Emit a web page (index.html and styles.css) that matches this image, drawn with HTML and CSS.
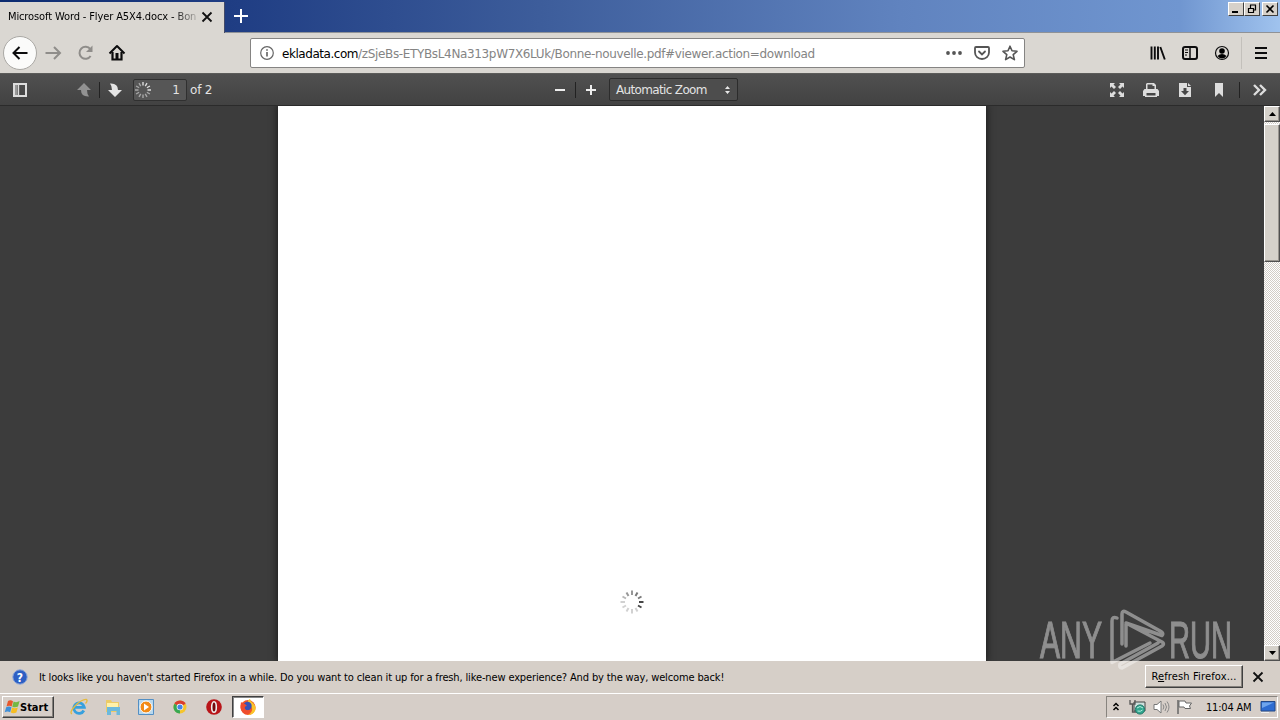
FILE: index.html
```html
<!DOCTYPE html>
<html lang="en">
<head>
    <meta charset="UTF-8">
    <meta name="viewport" content="width=device-width, initial-scale=1.0">
    <title>Microsoft Word - Flyer A5X4.docx - Bonne-nouvelle.pdf</title>
    <link rel="stylesheet" href="styles.css">
</head>
<body>

<header class="titlebar">
    <div class="tab">
        <span class="tab-title">Microsoft Word - Flyer A5X4.docx - Bon</span>
        <svg class="tab-close" width="12" height="12" viewBox="0 0 12 12"><path d="M1.500 1.500l9 9M10.500 1.500l-9 9" stroke="#111" stroke-width="1.800"/></svg>
    </div>
    <svg class="new-tab" width="16" height="16" viewBox="0 0 16 16"><path d="M8 1v14M1 8h14" stroke="#fff" stroke-width="2"/></svg>
    <div class="window-buttons">
        <span class="win-btn"><svg width="14" height="12"><path d="M3 9h6" stroke="#000" stroke-width="2"/></svg></span>
        <span class="win-btn"><svg width="14" height="12"><path d="M5 2h6M5.500 2v3M10.500 2v5H9M3 5.500h6M3.500 5v4.500h5V5" fill="none" stroke="#000" stroke-width="1.200"/></svg></span>
        <span class="win-btn win-close"><svg width="14" height="12"><path d="M3.500 2.500l7 7M10.500 2.500l-7 7" stroke="#000" stroke-width="1.600"/></svg></span>
    </div>
</header>

<nav class="navbar">
    <span class="back"><svg width="18" height="18" viewBox="0 0 18 18"><path d="M16.500 9H2.500M8.500 3L2.500 9l6 6" fill="none" stroke="#0c0c0d" stroke-width="2"/></svg></span>
    <svg class="forward" width="18" height="18" viewBox="0 0 18 18"><path d="M1.500 9h14M10 3l6 6-6 6" fill="none" stroke="#8f8d8a" stroke-width="2"/></svg>
    <svg class="reload" width="18" height="18" viewBox="0 0 18 18"><path d="M14.300 5.200A6 6 0 1 0 14.600 12" fill="none" stroke="#8f8d8a" stroke-width="2"/><path d="M16.500 1.500v6.500h-6.500z" fill="#8f8d8a"/></svg>
    <svg class="home" width="18" height="18" viewBox="0 0 18 18"><path d="M1.500 9.500L9 2l7.500 7.500" fill="none" stroke="#0c0c0d" stroke-width="2" stroke-linejoin="round"/><path d="M4.500 8v7.500h9V8" fill="none" stroke="#0c0c0d" stroke-width="2.200"/><path d="M7.500 9h3v7h-3z" fill="#0c0c0d"/></svg>
    <div class="urlbar">
        <svg class="info" width="14" height="14" viewBox="0 0 14 14"><circle cx="7" cy="7" r="6.300" fill="none" stroke="#666" stroke-width="1.200"/><path d="M7 6v4.500M7 3.300v1.500" stroke="#555" stroke-width="1.500"/></svg>
        <span class="url"><span class="domain">ekladata.com</span><span class="path">/zSjeBs-ETYBsL4Na313pW7X6LUk/Bonne-nouvelle.pdf#viewer.action=download</span></span>
        <svg class="dots" width="16" height="16" viewBox="0 0 16 16" fill="#555"><circle cx="2" cy="8" r="1.900"/><circle cx="8" cy="8" r="1.900"/><circle cx="14" cy="8" r="1.900"/></svg>
        <svg class="pocket" width="16" height="16" viewBox="0 0 16 16" fill="none" stroke="#555" stroke-width="1.800" stroke-linecap="round"><path d="M2 2h12q1 0 1 1v4.500a7 6.500 0 0 1-14 0V3q0-1 1-1z"/><path d="M5 6.500l3 3 3-3"/></svg>
        <svg class="star" width="16" height="16" viewBox="0 0 16 16"><path d="M8 1.200l2 4.600 5 .5-3.800 3.300 1.200 5L8 12l-4.400 2.600 1.200-5L1 6.300l5-.5z" fill="none" stroke="#555" stroke-width="1.600" stroke-linejoin="round"/></svg>
    </div>
    <div class="nav-tools">
        <svg width="16" height="16" viewBox="0 0 16 16"><path d="M1.500 1.500v13M4.800 1.500v13M8 1.500v13M10.300 2l4.500 12.500" fill="none" stroke="#0c0c0d" stroke-width="1.900"/></svg>
        <svg width="16" height="16" viewBox="0 0 16 16"><rect x="1" y="2" width="14" height="12" rx="2" fill="none" stroke="#0c0c0d" stroke-width="2"/><path d="M8 2v12" stroke="#0c0c0d" stroke-width="1.500"/><path d="M3 5h3M3 7.500h3M3 10h2" stroke="#0c0c0d"/></svg>
        <svg width="16" height="16" viewBox="0 0 16 16"><circle cx="8" cy="8" r="6.500" fill="none" stroke="#0c0c0d" stroke-width="1.200"/><circle cx="8" cy="6" r="2.800"/><path d="M3.500 11q2-2 4.500-2t4.500 2q-2 2.500-4.500 2.500T3.500 11z"/></svg>
        <span class="nav-sep"></span>
        <svg width="16" height="16" viewBox="0 0 16 16"><path d="M2 3h12M2 8h12M2 13h12" stroke="#0c0c0d" stroke-width="2"/></svg>
    </div>
</nav>

<div class="pdf-toolbar">
    <div class="pdf-left">
        <svg class="sidebar-toggle" width="16" height="16" viewBox="0 0 16 16"><path d="M2 2h12v12H2z" fill="none" stroke="#ddd" stroke-width="2"/><path d="M3 3h2.500v10H3z" fill="#999"/><path d="M6.500 3v10" stroke="#ddd" stroke-width="1.300"/></svg>
        <svg class="page-up" width="16" height="16" viewBox="0 0 16 16"><path d="M8 1l7 7h-4q0 4 2 6.500Q5 15 5 8H1z" fill="#929292"/></svg>
        <span class="pdf-sep"></span>
        <svg class="page-down" width="16" height="16" viewBox="0 0 16 16"><path d="M8 15l7-7h-4Q11 1 3 1.500 5 4 5 8H1z" fill="#e4e4e4"/></svg>
        <div class="page-box">
            <svg width="18" height="18" viewBox="-9 -9 18 18" stroke="#ddd" stroke-width="1.400">
                <path d="M0-4.500v-3.500M2.250-3.900l1.750-3M3.900-2.250l3-1.750M4.500 0h3.500"/>
                <path opacity=".6" d="M3.900 2.250l3 1.750M2.250 3.900l1.750 3M0 4.500v3.500M-2.250 3.900l-1.750 3M-3.900 2.250l-3 1.750M-4.500 0h-3.500M-3.900-2.250l-3-1.750M-2.250-3.900l-1.750-3"/>
            </svg>
            <span>1</span>
        </div>
        <span class="page-count">of 2</span>
    </div>
    <div class="pdf-middle">
        <svg width="16" height="16" viewBox="0 0 16 16"><path d="M3 8h10" stroke="#eee" stroke-width="2"/></svg>
        <span class="pdf-sep"></span>
        <svg width="16" height="16" viewBox="0 0 16 16"><path d="M3 8h10M8 3v10" stroke="#eee" stroke-width="2"/></svg>
        <div class="zoom-select">
            <span>Automatic Zoom</span>
            <svg width="7" height="10" viewBox="0 0 7 10" fill="#e8e8e8"><path d="M3.500 1L6 4h-5zM3.500 9L6 6h-5z"/></svg>
        </div>
    </div>
    <div class="pdf-right">
        <svg width="16" height="16" viewBox="0 0 16 16" fill="#ddd"><path d="M1 1h5L4.500 2.500 7 5 5 7 2.500 4.500 1 6zM15 1h-5l1.500 1.500L9 5l2 2 2.500-2.500L15 6zM1 15h5l-1.500-1.500L7 11 5 9l-2.500 2.500L1 10zM15 15h-5l1.500-1.500L9 11l2-2 2.500 2.500L15 10z"/></svg>
        <svg width="16" height="16" viewBox="0 0 16 16" fill="#ddd"><path fill-rule="evenodd" d="M4 1h7l2 2v4h1.500L16 9v5h-2v1H2v-1H0V9l1.500-2H3V2zM4.500 2.500V7h7V4h-2V2.500zM3.500 11v2.500h9V11z"/></svg>
        <svg width="16" height="16" viewBox="0 0 16 16" fill="#ddd"><path fill-rule="evenodd" d="M2 1h8v4h4v10H2zM6.500 6v3H4l4 4.200L12 9H9.500V6z"/><path d="M11 1l3 3h-3z"/></svg>
        <svg width="16" height="16" viewBox="0 0 16 16" fill="#ddd"><path d="M4 1h8v14l-4-4-4 4z"/></svg>
        <span class="pdf-sep"></span>
        <svg width="16" height="16" viewBox="0 0 16 16"><path d="M2 3l5 5-5 5M8 3l5 5-5 5" fill="none" stroke="#ddd" stroke-width="2.400"/></svg>
    </div>
</div>

<main class="viewer">
    <div class="page">
        <svg class="loading" width="24" height="24" viewBox="-12 -12 24 24" stroke="#333" stroke-width="2">
            <path opacity=".5" d="M0-7v-4.500M-3.500-6l-2-3.500"/>
            <path opacity=".65" d="M3.500-6l2-3.500M6-3.500l3.500-2"/>
            <path opacity=".9" d="M7 0h4.500M6 3.500l3.500 2"/>
            <path opacity=".22" d="M3.500 6l2 3.500M0 7v4.500M-3.500 6l-2 3.500M-6 3.500l-3.500 2M-7 0h-4.500"/>
            <path opacity=".35" d="M-6-3.500l-3.500-2"/>
        </svg>
    </div>
    <div class="scrollbar">
        <span class="scroll-btn"><svg width="7" height="4"><path d="M3.500 0L7 4H0z"/></svg></span>
        <span class="scroll-thumb"></span>
        <span class="scroll-btn scroll-down"><svg width="7" height="4"><path d="M3.500 4L7 0H0z"/></svg></span>
    </div>
</main>

<div class="notification">
    <svg class="help" width="16" height="16" viewBox="0 0 16 16"><circle cx="8" cy="8" r="7.200" fill="#2d5fc4" stroke="#8ca6d8"/><text x="8" y="12.500" text-anchor="middle" class="help-mark">?</text></svg>
    <span class="notice">It looks like you haven't started Firefox in a while. Do you want to clean it up for a fresh, like-new experience? And by the way, welcome back!</span>
    <span class="refresh">R<u>e</u>fresh Firefox...</span>
    <svg class="notice-close" width="12" height="12" viewBox="0 0 12 12"><path d="M1.500 1.500l9 9M10.500 1.500l-9 9" stroke="#111" stroke-width="1.800"/></svg>
</div>

<footer class="taskbar">
    <div class="start">
        <svg width="16" height="16" viewBox="0 0 16 16"><path d="M4 2q2.500-1.500 5 .3L7.700 7.500q-2.500-1.500-5.200 0z" fill="#e8582c"/><path d="M9.600 2.600q3 1.300 6-.6L14 7.500q-2.500 1.500-5.700.3z" fill="#74b843"/><path d="M2.200 8.300q2.800-1.500 5.300 0l-1.300 5q-2.700-1.500-5.500 0z" fill="#3f8fd8"/><path d="M8.100 8.600q3 1.300 5.700-.2L12.400 13.500q-3 1.500-5.600.1z" fill="#f6bd22"/></svg>
        <span>Start</span>
    </div>
    <div class="quick-launch">
        <svg width="18" height="18" viewBox="0 0 18 18"><path d="M13.800 12.500A5.300 5.300 0 1 1 14.300 9.300H5" fill="none" stroke="#36a0de" stroke-width="2.800"/><path d="M2 16Q-1 14.500 5 8 12 1 16.500 1.500q1.500 1.500-1 4" fill="none" stroke="#e5ba3c" stroke-width="1.300"/></svg>
        <svg width="18" height="18" viewBox="0 0 18 18"><path d="M2 2h5l1 2h7v10H2z" fill="#eccb67"/><path d="M3 5h11v6H3z" fill="#fff1a9"/><path d="M3 9h13v8h-3.500v-4H7v4H3z" fill="#6cb9dc"/></svg>
        <svg width="18" height="18" viewBox="0 0 18 18"><path d="M1.500 1.500h15v15h-15z" fill="#b8d8ee" stroke="#538fc4"/><circle cx="9" cy="9" r="6" fill="#f28b18" stroke="#fff"/><path d="M7 5.500l5 3.500-5 3.500z" fill="#fff"/></svg>
        <svg width="18" height="18" viewBox="0 0 18 18"><circle cx="9" cy="9" r="6.500" fill="#f5c52c"/><path d="M9 9L3.400 5.700A6.500 6.500 0 0 1 14.600 5.700z" fill="#d93e30"/><path d="M3.400 5.700L9 9v6.500A6.500 6.500 0 0 1 3.400 5.700z" fill="#38a852"/><circle cx="9" cy="9" r="3.300" fill="#fff"/><circle cx="9" cy="9" r="2.600" fill="#4385e6"/></svg>
        <svg width="18" height="18" viewBox="0 0 18 18"><circle cx="9" cy="9" r="7.800" fill="#b91519"/><ellipse cx="9" cy="9" rx="2.300" ry="5.300" fill="#74090c" stroke="#eee" stroke-width="1.600"/></svg>
        <span class="task-active"><svg width="18" height="18" viewBox="0 0 18 18"><circle cx="9" cy="9.500" r="7.500" fill="#f0562b"/><path d="M9 4Q8.500 2 11 1q0 2 3 4 4 4 2 8-2 4-7 4 5-3 4-7z" fill="#fbc428"/><circle cx="8.500" cy="8" r="4.200" fill="#3651b5"/><path d="M2 4q1 1.500 4 2l2 2q-3 0-2 3 2 2.500 5.500 1 -1 4-5 4-5-2-5-8z" fill="#ef4c2c"/></svg></span>
    </div>
    <div class="tray">
        <svg width="8" height="12" viewBox="0 0 8 12"><path d="M1.500 5L4 2.500 6.500 5M1.500 9L4 6.500 6.500 9" fill="none" stroke="#000" stroke-width="1.500"/></svg>
        <svg class="tray-net" width="17" height="16" viewBox="0 0 17 16"><path d="M5 3h11v9H5z" fill="#cde0dd" stroke="#444"/><path d="M1 1v4h5V1M3.500 5v8H8" fill="none" stroke="#555" stroke-width="1.300"/><circle cx="11" cy="10.500" r="4.600" fill="#31a58d" stroke="#23796b"/><path d="M8 9q3-3 6 0M8.500 12q3 1 5-1" fill="none" stroke="#b4eee0"/></svg>
        <svg class="tray-sound" width="17" height="16" viewBox="0 0 17 16"><path d="M1 5.500h3L8 2v12l-4-3.500H1z" fill="#fff" stroke="#777"/><path d="M10 5.500q1.800 2.500 0 5M12 4q3 4 0 8M14 2.500q4 5.500 0 11" fill="none" stroke="#888"/></svg>
        <svg class="tray-flag" width="17" height="16" viewBox="0 0 17 16"><path d="M2 1v14" stroke="#666" stroke-width="1.500"/><path d="M3 2h6l1 2h5.500L13.500 7l1 2.500H9L8 8H3z" fill="#fff" stroke="#666"/></svg>
        <span class="clock">11:04 AM</span>
        <svg class="tray-desktop" width="16" height="14" viewBox="0 0 16 14"><path d="M1 1.500h14V11H1z" fill="#2e6cd1" stroke="#234886"/><path d="M2 2.500h12L2 8z" fill="#6fa5ed"/><path d="M1 12.500h8" stroke="#eee"/></svg>
    </div>
</footer>

<svg class="watermark" width="204" height="68" viewBox="0 0 204 68">
    <text x="2" y="50" textLength="62" lengthAdjust="spacingAndGlyphs">ANY</text>
    <text x="131" y="50" textLength="63" lengthAdjust="spacingAndGlyphs">RUN</text>
    <path d="M79 10q-5-2-5 3v41.500L112 35M84 36V6q0-4 4-2l35 19.500q3 2 1 4L88 15v23M88 15l36 19q3 2 0 4L84 60q-3 0-2-4l38-21"/>
</svg>

</body>
</html>
```
FILE: styles.css
```css
* {
    box-sizing: border-box;
}

body {
    margin: 0;
    width: 1280px;
    height: 720px;
    overflow: hidden;
    display: flex;
    flex-direction: column;
    position: relative;
    font-family: "DejaVu Sans Condensed", "DejaVu Sans", sans-serif;
    font-stretch: condensed;
    font-size: 11px;
    color: #000;
    background: #d6cfc9;
    white-space: nowrap;
}

svg {
    display: block;
    flex: none;
}

/* Title bar with tabs */
.titlebar {
    height: 33px;
    flex: none;
    display: flex;
    align-items: flex-start;
    background: linear-gradient(90deg, #0c2b70 0, #203e84 240px, #3d5d9b 540px, #6083bf 900px, #7096d0 1180px, #a0c3ee 1280px);
    border-bottom: 1px solid #8f9297;
}

.tab {
    width: 225px;
    height: 31px;
    margin-top: 2px;
    padding: 0 11px 2px 8px;
    display: flex;
    align-items: center;
    justify-content: space-between;
    background: #dad7d2;
    border-right: 1px solid #444b68;
}

.tab-title {
    letter-spacing: -0.12px;
    -webkit-mask-image: linear-gradient(90deg, #000 165px, transparent 194px);
    mask-image: linear-gradient(90deg, #000 165px, transparent 194px);
}

.new-tab {
    margin: 8px 0 0 8px;
}

.window-buttons {
    display: flex;
    margin: 2px 2px 0 auto;
}

.win-btn {
    width: 16px;
    height: 14px;
    background: #d6d1ca;
    border: 1px solid;
    border-color: #fff #404040 #404040 #fff;
}

.win-close {
    margin-left: 2px;
}

/* Navigation bar */
.navbar {
    height: 40px;
    flex: none;
    display: flex;
    align-items: center;
    background: #dad7d2;
}

.back {
    width: 34px;
    height: 34px;
    margin-left: 3px;
    display: flex;
    align-items: center;
    justify-content: center;
    border: 1px solid #aaa8a4;
    border-radius: 50%;
    background: #fbfbfa;
}

.forward {
    margin-left: 7px;
}

.reload {
    margin-left: 14px;
}

.home {
    margin-left: 14px;
}

.urlbar {
    width: 775px;
    height: 30px;
    margin-left: 124px;
    padding: 0 6px 0 9px;
    display: flex;
    align-items: center;
    background: #fff;
    border: 1px solid #858483;
    border-radius: 2px;
}

.url {
    margin-left: 8px;
    padding-top: 1px;
    flex: 1;
    font-family: "DejaVu Sans", sans-serif;
    font-stretch: normal;
    font-size: 12px;
}

.domain {
    letter-spacing: -0.45px;
}

.path {
    color: #848484;
    letter-spacing: -0.35px;
}

.pocket,
.star {
    margin-left: 12px;
}

.nav-tools {
    display: flex;
    align-items: center;
    gap: 16px;
    margin: 0 11px 0 auto;
}

.nav-sep {
    width: 1px;
    height: 32px;
    margin: 0 -5px;
    background: #c3c0bb;
}

/* PDF toolbar */
.pdf-toolbar {
    height: 33px;
    flex: none;
    display: grid;
    grid-template-columns: 552px 1fr auto;
    align-items: center;
    background: linear-gradient(#505050, #424242);
    border-top: 1px solid #5c5c5a;
    border-bottom: 1px solid #2b2b2b;
    color: #e3e3e3;
    font-family: "DejaVu Sans", sans-serif;
    font-stretch: normal;
    font-size: 12px;
}

.pdf-left,
.pdf-middle,
.pdf-right {
    display: flex;
    align-items: center;
}

.pdf-sep {
    width: 1px;
    height: 16px;
    background: #222;
    margin: 0 7px;
}

.sidebar-toggle {
    margin-left: 12px;
}

.page-up {
    margin-left: 48px;
}

.page-box {
    width: 54px;
    height: 22px;
    margin-left: 10px;
    padding: 0 6px 0 0;
    display: flex;
    align-items: center;
    justify-content: space-between;
    background: #565656;
    border: 1px solid #303030;
    border-radius: 2px;
}

.page-count {
    margin-left: 3px;
    letter-spacing: -0.2px;
}

.zoom-select {
    width: 129px;
    height: 23px;
    margin-left: 10px;
    padding: 0 6px 0 6px;
    display: flex;
    align-items: center;
    justify-content: space-between;
    background: #4d4d4d;
    border: 1px solid #2c2c2c;
    border-radius: 2px;
    letter-spacing: -0.65px;
}

.pdf-right {
    gap: 18px;
    padding-right: 12px;
}

.pdf-right .pdf-sep {
    margin: 0 -6px 0 -6px;
}

/* Document area */
.viewer {
    height: 555px;
    flex: none;
    display: flex;
    background: #3c3c3c;
    overflow: hidden;
}

.page {
    width: 708px;
    margin-left: 278px;
    display: flex;
    justify-content: center;
    align-items: flex-end;
    padding-bottom: 47px;
    background: #fff;
    box-shadow: 0 0 7px 1px #1c1c1c;
}

.scrollbar {
    width: 16px;
    margin-left: auto;
    display: flex;
    flex-direction: column;
    background: repeating-conic-gradient(#fff 0 25%, #d2cdc6 0 50%) 0 0 / 2px 2px;
}

.scroll-btn {
    height: 16px;
    display: flex;
    align-items: center;
    justify-content: center;
}

.scroll-btn,
.scroll-thumb {
    background: #d5d1ca;
    border: 1px solid;
    border-color: #fff #505050 #505050 #fff;
    box-shadow: inset -1px -1px #99958f;
}

.scroll-thumb {
    height: 138px;
    margin-top: 2px;
}

.scroll-down {
    margin-top: auto;
}

/* Notification bar */
.notification {
    height: 32px;
    flex: none;
    display: flex;
    align-items: center;
    padding: 0 16px 0 12px;
    background: #d6cfc8;
}

.help-mark {
    font-family: "DejaVu Sans", sans-serif;
    font-size: 12px;
    font-weight: bold;
    fill: #fff;
}

.notice {
    margin-left: 11px;
    letter-spacing: -0.137px;
}

.refresh {
    width: 98px;
    height: 23px;
    margin: -2px 9px 0 auto;
    line-height: 21px;
    text-align: center;
    letter-spacing: 0.15px;
    border: 1px solid;
    border-color: #fff #404040 #404040 #fff;
    box-shadow: inset -1px -1px #85817c;
}

/* Taskbar */
.taskbar {
    height: 27px;
    flex: none;
    display: flex;
    align-items: center;
    background: #d6cec8;
    border-top: 1px solid #fff;
}

.start {
    width: 52px;
    height: 22px;
    margin-left: 2px;
    padding-left: 1px;
    display: flex;
    align-items: center;
    font-weight: bold;
    border: 1px solid;
    border-color: #fff #404040 #404040 #fff;
    box-shadow: inset -1px -1px #85817c;
}

.start span {
    letter-spacing: 0;
}

.quick-launch {
    display: flex;
    align-items: center;
    gap: 15.7px;
    margin-left: 16px;
}

.task-active {
    width: 32px;
    height: 22px;
    margin-left: -6px;
    display: flex;
    align-items: center;
    justify-content: center;
    background: #fff;
    border: 1px solid;
    border-color: #404040 #fff #fff #404040;
    box-shadow: inset 1px 1px #888;
}

.tray {
    width: 172px;
    height: 22px;
    margin: 0 2px 0 auto;
    padding: 0 1px 0 5px;
    display: flex;
    align-items: center;
    border: 1px solid;
    border-color: #88847f #fff #fff #88847f;
}

.tray-net {
    margin-left: 9px;
}

.tray-sound,
.tray-flag {
    margin-left: 7px;
}

.tray-flag {
    margin-left: 6px;
}

.clock {
    margin-left: 13px;
    letter-spacing: -0.2px;
}

.tray-desktop {
    margin-left: auto;
}

/* Logo lying over the document and the bars */
.watermark {
    position: absolute;
    left: 1038px;
    top: 608px;
    opacity: 0.42;
    fill: none;
    stroke: #fff;
}

.watermark text {
    font-family: "Liberation Sans", sans-serif;
    font-size: 52px;
    fill: #fff;
    stroke-width: 1.1px;
}

.watermark path {
    stroke-width: 3.5px;
    stroke-linejoin: round;
    stroke-linecap: round;
}
```
